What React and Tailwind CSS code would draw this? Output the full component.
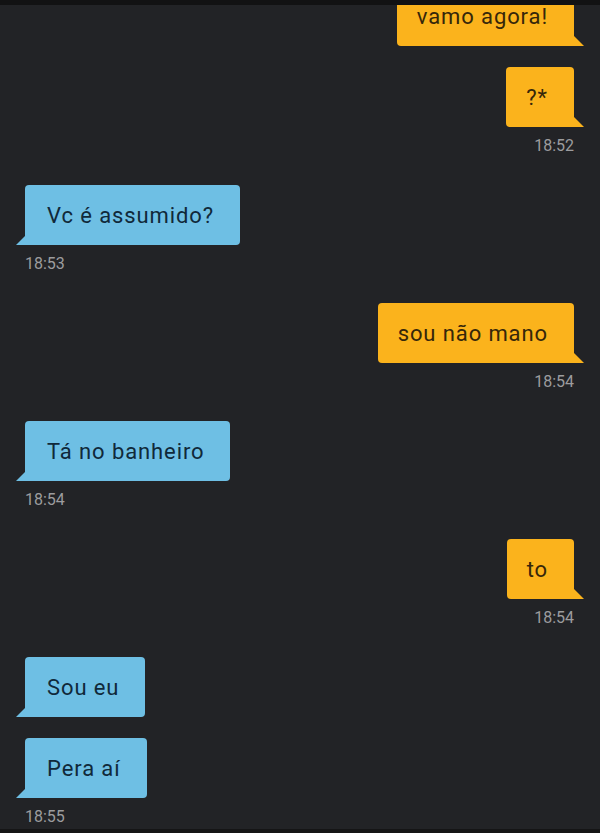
const messages = [
  { id: 1, side: "right", text: "vamo agora!", first: true },
  { id: 2, side: "right", text: "?*", time: "18:52" },
  { id: 3, side: "left", text: "Vc é assumido?", time: "18:53" },
  { id: 4, side: "right", text: "sou não mano", time: "18:54" },
  { id: 5, side: "left", text: "Tá no banheiro", time: "18:54" },
  { id: 6, side: "right", text: "to", time: "18:54" },
  { id: 7, side: "left", text: "Sou eu" },
  { id: 8, side: "left", text: "Pera aí", time: "18:55" },
];

function Tail({ side }) {
  if (side === "right") {
    return (
      <svg
        className="absolute bottom-0 right-[-10px]"
        width="10"
        height="10"
        viewBox="0 0 10 10"
      >
        <path d="M0 0 L10 10 L0 10 Z" fill="#fbb31c" />
      </svg>
    );
  }
  return (
    <svg
      className="absolute bottom-0 left-[-9px]"
      width="10"
      height="10"
      viewBox="0 0 10 10"
    >
      <path d="M10 0 L0 10 L10 10 Z" fill="#6ebfe4" />
    </svg>
  );
}

function Bubble({ msg }) {
  const right = msg.side === "right";
  return (
    <div className={right ? "flex justify-end pr-[26px]" : "flex justify-start pl-[25px]"}>
      <div
        className={
          right
            ? "relative flex h-[60px] items-center bg-[#fbb31c] pl-[20px] pr-[26px] text-[#36270a] " +
              "rounded-t-[4px] rounded-bl-[4px]"
            : "relative flex h-[60px] items-center bg-[#6ebfe4] pl-[22px] pr-[26px] text-[#10293a] " +
              "rounded-t-[4px] rounded-br-[4px]"
        }
      >
        <span className="text-[22px] tracking-[0.9px] whitespace-nowrap">{msg.text}</span>
        <Tail side={msg.side} />
      </div>
    </div>
  );
}

export default function App() {
  return (
    <div
      className="flex h-[833px] w-[600px] flex-col overflow-hidden bg-[#222326]"
      style={{ fontFamily: "Roboto, 'Noto Sans', sans-serif" }}
    >
      <div className="h-[5px] shrink-0 bg-[#121213]" />
      <div className="flex-1 overflow-hidden">
        {messages.map((msg, i) => {
          const prev = messages[i - 1];
          let mt = "";
          if (msg.first) mt = "-mt-[19px]";
          else if (prev && prev.time) mt = "mt-[29px]";
          else mt = "mt-[21px]";
          return (
            <div key={msg.id} className={mt}>
              <Bubble msg={msg} />
              {msg.time ? (
                <div
                  className={
                    "mt-[9px] h-5 text-[16px] leading-5 text-[#9c9c9e] " +
                    (msg.side === "right" ? "pr-[26px] text-right" : "pl-[25px] text-left")
                  }
                >
                  {msg.time}
                </div>
              ) : null}
            </div>
          );
        })}
      </div>
      <div className="h-[4px] shrink-0 bg-[#151516]" />
    </div>
  );
}
